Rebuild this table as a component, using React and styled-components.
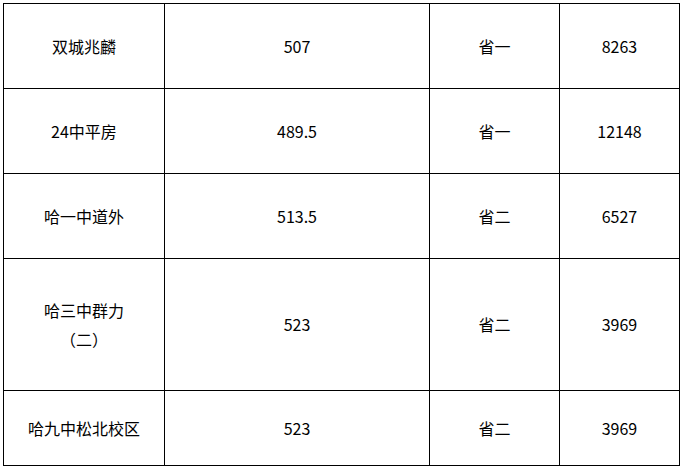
import React from "react";
import styled, { createGlobalStyle } from "styled-components";

const Global = createGlobalStyle`
  html, body { margin: 0; padding: 0; background: #ffffff; }
  body { font-family: "Noto Sans CJK SC", "Noto Sans", sans-serif; }
`;

const Page = styled.div`
  padding: 3px 0 0 3px;
`;

const Grid = styled.div`
  display: grid;
  grid-template-columns: 160px 264px 129px 119px;
  grid-template-rows: 84px 84px 84px 131px 74px;
  gap: 1px;
  padding: 1px;
  background: #000000;
  width: max-content;
`;

const Cell = styled.div`
  background: #ffffff;
  display: flex;
  align-items: center;
  justify-content: center;
  text-align: center;
  font-size: 16px;
  line-height: 29px;
  color: #000000;
  text-spacing-trim: space-all;
`;

const rows = [
  ["双城兆麟", "507", "省一", "8263"],
  ["24中平房", "489.5", "省一", "12148"],
  ["哈一中道外", "513.5", "省二", "6527"],
  [["哈三中群力", "（二）"], "523", "省二", "3969"],
  ["哈九中松北校区", "523", "省二", "3969"],
];

export default function App() {
  return (
    <>
      <Global />
      <Page>
        <Grid>
          {rows.map((r, i) =>
            r.map((c, j) => (
              <Cell key={`${i}-${j}`}>
                {Array.isArray(c) ? (
                  <span>
                    {c[0]}
                    <br />
                    {c[1]}
                  </span>
                ) : (
                  c
                )}
              </Cell>
            ))
          )}
        </Grid>
      </Page>
    </>
  );
}
